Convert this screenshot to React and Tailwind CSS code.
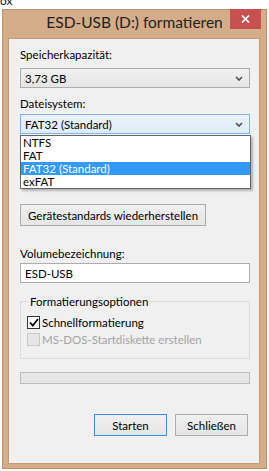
import React from 'react';

const font = { fontFamily: 'Lato, "Open Sans", sans-serif' };

function Chevron() {
    return (
        <svg width="8" height="5" viewBox="0 0 8 5" className="shrink-0">
            <polyline points="1,1 4,4 7,1" fill="none" stroke="#4d4d4d" strokeWidth="1.6" />
        </svg>
    );
}

function Checkbox({ checked, disabled }) {
    return (
        <span
            className={
                'w-[13px] h-[13px] flex items-center justify-center border shrink-0 ' +
                (disabled ? 'border-[#c8c8c8] bg-[#e6e6e6]' : 'border-[#333333] bg-white')
            }
        >
            {checked && (
                <svg width="10" height="9" viewBox="0 0 10 9">
                    <polyline points="1,4.5 3.8,7.5 9,1" fill="none" stroke="#000" strokeWidth="1.8" />
                </svg>
            )}
        </span>
    );
}

export default function App() {
    const options = ['NTFS', 'FAT', 'FAT32 (Standard)', 'exFAT'];

    return (
        <div className="w-[269px] h-[471px] bg-white overflow-hidden text-[11.5px] text-black" style={font}>
            {/* background window peeking out */}
            <div className="h-[9px] overflow-hidden">
                <div className="-mt-[5px] leading-[12px] text-[12px] text-[#222]">ox</div>
            </div>

            {/* dialog frame */}
            <div className="ml-[2px] w-[265px] h-[460px] border border-[#b8916c] bg-[#d4ad88] flex flex-col">
                <div className="h-[28px] relative flex justify-center items-start">
                    <div className="pt-[2px] text-[15.5px] leading-[20px] text-[#222] whitespace-nowrap">ESD-USB (D:) formatieren</div>
                    <div className="absolute right-[5px] -top-[1px] w-[31px] h-[20px] bg-[#c75050] flex items-center justify-center">
                        <svg width="9" height="8" viewBox="0 0 9 8">
                            <path d="M1 0.5 L8 7.5 M8 0.5 L1 7.5" stroke="#fff" strokeWidth="1.7" />
                        </svg>
                    </div>
                </div>

                {/* client area */}
                <div className="ml-[5px] mr-[6px] mb-[4px] flex-1 border border-[#c29c78] bg-[#f0f0f0] pl-[11px] pr-[9px] flex flex-col leading-[15px]">
                    <div className="mt-[8px]">Speicherkapazität:</div>
                    <div className="mt-[6px] h-[20px] border border-[#acacac] bg-gradient-to-b from-[#f0f0f0] to-[#e5e5e5] flex items-center justify-between pl-[4px] pr-[6px]">
                        <span>3,73 GB</span>
                        <Chevron />
                    </div>

                    <div className="mt-[8px]">Dateisystem:</div>
                    <div className="relative mt-[3px]">
                        <div className="h-[20px] border border-[#7eb4ea] bg-gradient-to-b from-[#ecf4fc] to-[#dcecfc] flex items-center justify-between pl-[4px] pr-[6px]">
                            <span>FAT32 (Standard)</span>
                            <Chevron />
                        </div>
                        <div className="absolute left-0 top-[21px] w-[231px] border border-[#646464] bg-white shadow-[2px_2px_2px_rgba(0,0,0,0.25)] z-10">
                            {options.map((o, i) => (
                                <div
                                    key={o}
                                    className={'h-[13px] leading-[13px] pl-[2px] ' + (i === 2 ? 'bg-[#3399ff] text-white' : '')}
                                >
                                    {o}
                                </div>
                            ))}
                        </div>
                    </div>

                    <div className="mt-[70px] flex">
                        <div className="h-[22px] px-[7px] border border-[#acacac] bg-gradient-to-b from-[#f0f0f0] to-[#e5e5e5] flex items-center">
                            Gerätestandards wiederherstellen
                        </div>
                    </div>

                    <div className="mt-[20px]">Volumebezeichnung:</div>
                    <div className="mt-[2px] h-[20px] border border-[#abadb3] bg-white flex items-center pl-[4px]">ESD-USB</div>

                    <fieldset className="mt-[11px] border border-[#dcdcdc] px-[6px] pb-[12px]">
                        <legend className="ml-[1px] px-[2px]">Formatierungsoptionen</legend>
                        <div className="mt-[7px] flex items-center gap-[2px] h-[13px]">
                            <Checkbox checked />
                            <span>Schnellformatierung</span>
                        </div>
                        <div className="mt-[4px] flex items-center gap-[2px] h-[13px] text-[#a3a3a3]">
                            <Checkbox disabled />
                            <span>MS-DOS-Startdiskette erstellen</span>
                        </div>
                    </fieldset>

                    <div className="mt-[13px] h-[12px] border border-[#bcbcbc] bg-[#e6e6e6]"></div>

                    <div className="mt-[30px] mr-[2px] flex justify-end gap-[8px]">
                        <div className="w-[73px] h-[22px] border border-[#3c8ee0] bg-gradient-to-b from-[#f0f0f0] to-[#e5e5e5] flex items-center justify-center">
                            Starten
                        </div>
                        <div className="w-[73px] h-[22px] border border-[#acacac] bg-gradient-to-b from-[#f0f0f0] to-[#e5e5e5] flex items-center justify-center">
                            Schließen
                        </div>
                    </div>
                </div>
            </div>
        </div>
    );
}
